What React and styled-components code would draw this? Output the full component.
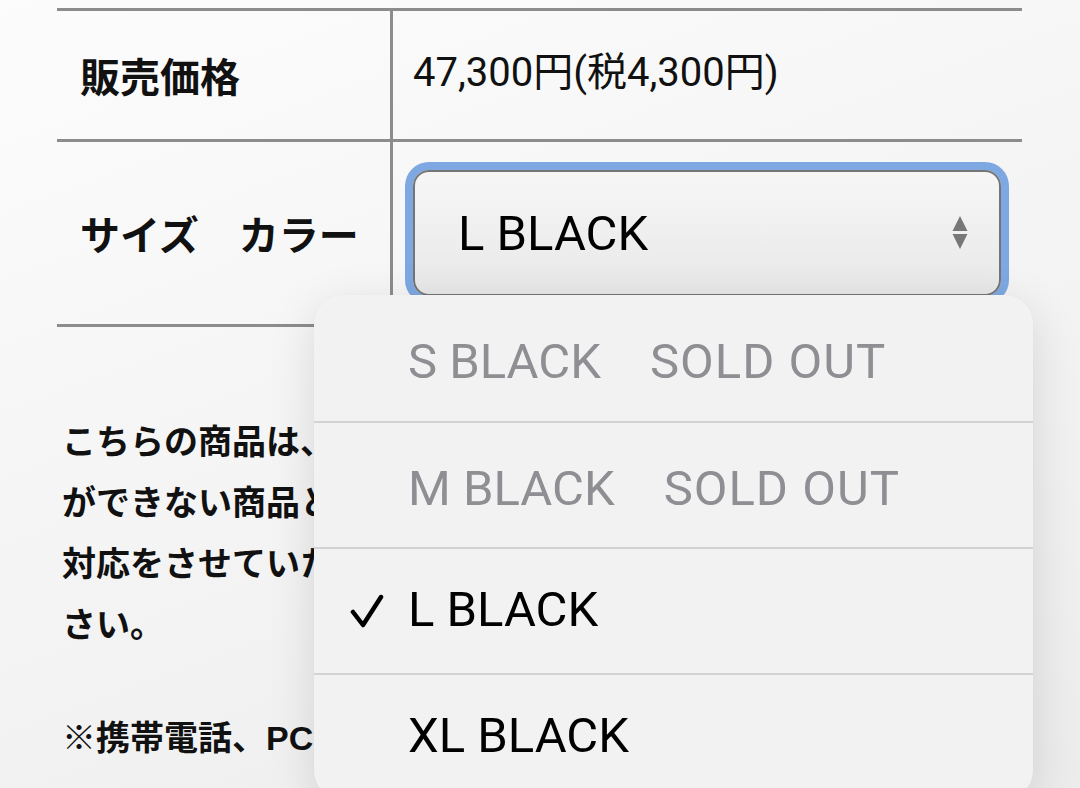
import React from "react";
import styled, { createGlobalStyle } from "styled-components";

const GlobalStyle = createGlobalStyle`
  html, body {
    margin: 0;
    padding: 0;
    height: 788px;
    overflow: hidden;
  }
  body {
    background: linear-gradient(160deg, #fcfcfc 0%, #f5f5f5 45%, #ececec 100%);
    font-family: "Noto Sans CJK JP", "Noto Sans", sans-serif;
    color: #000;
  }
`;

const Page = styled.div`
  width: 965px;
  padding: 8px 0 0 57px;
`;

const Table = styled.div`
  border-top: 3px solid #8c8c8c;
`;

const Row = styled.div`
  display: grid;
  grid-template-columns: 336px 1fr;
  height: ${(p) => p.$h}px;
  border-bottom: 3px solid #8c8c8c;
`;

const Label = styled.div`
  display: flex;
  align-items: center;
  padding-left: 23px;
  border-right: 3px solid #8c8c8c;
  font-family: "Noto Sans CJK JP", sans-serif;
  font-weight: 700;
  font-size: 40px;
  color: #111;
  white-space: pre;
`;

const Value = styled.div`
  display: flex;
  align-items: center;
  padding: 0 21px 0 20px;
`;

const Price = styled.span`
  font-family: Roboto, "Noto Sans CJK JP", sans-serif;
  font-size: 40px;
  color: #111;
  margin-top: -13px;
`;

const SelectBox = styled.div`
  position: relative;
  flex: 1;
  height: 126px;
  box-sizing: border-box;
  border: 2px solid #757575;
  border-radius: 16px;
  background: linear-gradient(#f6f6f6, #e8e8e8);
  box-shadow: 0 0 0 8px #7da8e2;
  display: flex;
  align-items: center;
  justify-content: space-between;
  padding: 0 31px 0 43px;
`;

const SelectText = styled.span`
  font-family: Roboto, sans-serif;
  font-size: 49px;
  color: #000;
`;

const Arrows = styled.svg`
  width: 16px;
  height: 34px;
  display: block;
`;

const Menu = styled.div`
  position: absolute;
  left: -101px;
  top: 123px;
  width: 719px;
  background: #f2f2f3;
  border-radius: 28px;
  box-shadow: 0 12px 48px rgba(0, 0, 0, 0.12), 0 0 2px rgba(0, 0, 0, 0.04);
  overflow: hidden;
  z-index: 5;
`;

const Option = styled.div`
  display: grid;
  grid-template-columns: 94px 1fr;
  align-items: center;
  height: 126px;
  box-sizing: border-box;
  border-top: ${(p) => (p.$first ? "none" : "2px solid #d3d3d5")};
`;

const CheckSlot = styled.div`
  display: flex;
  justify-content: flex-end;
  padding-right: 24px;
`;

const OptionText = styled.span`
  font-family: Roboto, "Noto Sans CJK JP", sans-serif;
  font-size: 49px;
  color: ${(p) => (p.$disabled ? "#8e8e93" : "#000")};
  white-space: pre;
  margin-top: -4px;
`;

const Sold = styled.span`
  letter-spacing: 1px;
`;

const Notes = styled.div`
  margin-top: 85px;
  padding-left: 5px;
  font-family: "Liberation Sans", "Noto Sans CJK JP", sans-serif;
  font-weight: 700;
  font-size: 34px;
  line-height: 61px;
  color: #111;
  white-space: nowrap;
`;

const Para = styled.p`
  margin: ${(p) => (p.$gap ? "52px 0 0" : "0")};
`;

const Check = () => (
  <svg width="34" height="34" viewBox="0 0 34 34">
    <path
      d="M3 18 L13 31 L31 3"
      fill="none"
      stroke="#000"
      strokeWidth="4.5"
      strokeLinecap="round"
      strokeLinejoin="round"
    />
  </svg>
);

const options = [
  { label: "S BLACK", sold: true },
  { label: "M BLACK", sold: true },
  { label: "L BLACK", selected: true },
  { label: "XL BLACK" },
];

export default function App() {
  return (
    <>
      <GlobalStyle />
      <Page>
        <Table>
          <Row $h={128}>
            <Label>販売価格</Label>
            <Value>
              <Price>47,300円(税4,300円)</Price>
            </Value>
          </Row>
          <Row $h={182}>
            <Label>サイズ　カラー</Label>
            <Value>
              <SelectBox>
                <SelectText>L BLACK</SelectText>
                <Arrows viewBox="0 0 16 34">
                  <path d="M8 0 L15.5 15 L0.5 15 Z" fill="#777" />
                  <path d="M0.5 18 L15.5 18 L8 33 Z" fill="#777" />
                </Arrows>
                <Menu>
                  {options.map((o, i) => (
                    <Option key={o.label} $first={i === 0}>
                      <CheckSlot>{o.selected ? <Check /> : null}</CheckSlot>
                      <OptionText $disabled={o.sold}>
                        {o.label}
                        {o.sold ? (
                          <>
                            {"　"}
                            <Sold>SOLD OUT</Sold>
                          </>
                        ) : null}
                      </OptionText>
                    </Option>
                  ))}
                </Menu>
              </SelectBox>
            </Value>
          </Row>
        </Table>
        <Notes>
          <Para>
            こちらの商品は、お客様都合による返品・交換
            <br />
            ができない商品となります。予めご了承の上
            <br />
            対応をさせていただきますので、ご了承くだ
            <br />
            さい。
          </Para>
          <Para $gap>※携帯電話、PCのモニターの環境により</Para>
        </Notes>
      </Page>
    </>
  );
}
